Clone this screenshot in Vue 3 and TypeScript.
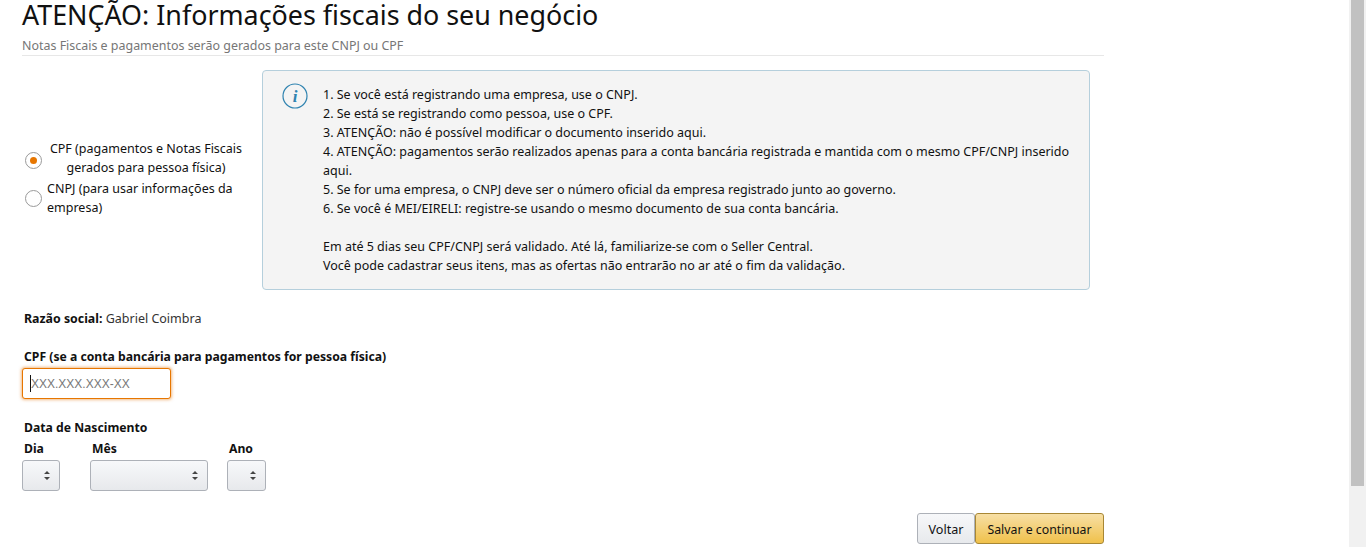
<script setup lang="ts">
const rules: string[] = [
  '1. Se você está registrando uma empresa, use o CNPJ.',
  '2. Se está se registrando como pessoa, use o CPF.',
  '3. ATENÇÃO: não é possível modificar o documento inserido aqui.',
  '4. ATENÇÃO: pagamentos serão realizados apenas para a conta bancária registrada e mantida com o mesmo CPF/CNPJ inserido aqui.',
  '5. Se for uma empresa, o CNPJ deve ser o número oficial da empresa registrado junto ao governo.',
  '6. Se você é MEI/EIRELI: registre-se usando o mesmo documento de sua conta bancária.',
]
const dates = [
  { label: 'Dia', cls: 'dia' },
  { label: 'Mês', cls: 'mes' },
  { label: 'Ano', cls: 'ano' },
]
</script>

<template>
  <div class="page">
    <main class="content">
      <header class="head">
        <h1>ATENÇÃO: Informações fiscais do seu negócio</h1>
        <p>Notas Fiscais e pagamentos serão gerados para este CNPJ ou CPF</p>
      </header>

      <section class="top">
        <div class="radios">
          <div class="radio first">
            <span class="dot on"></span>
            <span class="rtext center">CPF (pagamentos e Notas Fiscais gerados para pessoa física)</span>
          </div>
          <div class="radio second">
            <span class="dot"></span>
            <span class="rtext">CNPJ (para usar informações da empresa)</span>
          </div>
        </div>
        <div class="info">
          <svg class="icon" width="26" height="26" viewBox="0 0 26 26">
            <circle cx="13" cy="13" r="12" fill="none" stroke="#2f83b0" stroke-width="1.2" />
            <text x="13" y="19" text-anchor="middle" class="i">i</text>
          </svg>
          <div class="itext">
            <div v-for="r in rules" :key="r">{{ r }}</div>
            <div class="gap">Em até 5 dias seu CPF/CNPJ será validado. Até lá, familiarize-se com o Seller Central.</div>
            <div>Você pode cadastrar seus itens, mas as ofertas não entrarão no ar até o fim da validação.</div>
          </div>
        </div>
      </section>

      <p class="razao"><b>Razão social:</b> <span class="val">Gabriel Coimbra</span></p>

      <label class="cpf-label">CPF (se a conta bancária para pagamentos for pessoa física)</label>
      <div class="input"><span class="caret"></span><span class="ph">XXX.XXX.XXX-XX</span></div>

      <div class="nasc">Data de Nascimento</div>
      <div class="dates">
        <div v-for="d in dates" :key="d.label" :class="['date', d.cls]">
          <div class="dlabel">{{ d.label }}</div>
          <div class="select">
            <svg width="6" height="9" viewBox="0 0 6 9"><path d="M3 0 6 3H0zM3 9 0 6h6z" fill="#444" /></svg>
          </div>
        </div>
      </div>

      <div class="actions">
        <button class="btn back">Voltar</button>
        <button class="btn save">Salvar e continuar</button>
      </div>
    </main>
    <div class="scrollbar"><div class="thumb"></div></div>
  </div>
</template>

<style>
html, body { margin: 0; overflow: hidden; background: #fff; }
</style>

<style scoped>
.page {
  position: relative;
  height: 547px;
  overflow: hidden;
  font-family: "Noto Sans", "Liberation Sans", sans-serif;
  font-size: 12.5px;
  line-height: 19px;
  color: #111;
}
.content { width: 1082px; margin-left: 22px; }
.head { height: 55px; border-bottom: 1px solid #e7e7e7; }
h1 { margin: 0; font-weight: 400; font-size: 26.85px; line-height: 30px; }
.head p { margin: 8px 0 0; color: #767676; font-size: 12.45px; line-height: 16px; }
.top { display: flex; margin-top: 14px; }
.radios { width: 240px; padding-top: 69px; }
.radio { display: flex; align-items: center; }
.dot {
  width: 17px; height: 17px; border-radius: 50%; border: 1px solid #9a9a9a;
  box-sizing: border-box; flex: none; margin-left: 3px; display: flex;
  align-items: center; justify-content: center; background: #fff;
}
.dot.on { position: relative; top: 2px; }
.dot.on::after { content: ""; width: 7px; height: 7px; border-radius: 50%; background: #e77600; }
.rtext { margin-left: 5px; }
.first .rtext { margin-left: 4px; width: 200px; }
.center { text-align: center; }
.second { margin-top: 2px; }
.second .rtext { width: 195px; }
.info {
  width: 828px; height: 220px; box-sizing: border-box; display: flex;
  background: #f4f4f4; border: 1px solid #b5cfdc; border-radius: 4px;
  padding: 14px 16px 0 19px; margin-left: 0;
}
.icon { flex: none; margin-top: -2px; }
.i { font: italic 700 17px "Liberation Serif", serif; fill: #2f83b0; }
.itext { margin-left: 15px; width: 760px; }
.gap { margin-top: 19px; }
.razao { margin: 19px 0 0 2px; }
.razao b { font-size: 12.35px; font-weight: 700; }
.cpf-label, .nasc, .dlabel { font-size: 12.2px; font-weight: 700; }
.val { color: #333; }
.cpf-label { display: block; margin: 19px 0 0 2px; }
.input {
  width: 149px; height: 31px; margin-top: 2px; box-sizing: border-box; position: relative;
  border: 1px solid #e77600; border-radius: 3px; box-shadow: 0 0 3px 1px rgba(228, 121, 17, .5);
  display: flex; align-items: center; padding-left: 7px; background: #fff;
}
.caret { width: 1px; height: 17px; background: #111; flex: none; }
.ph { color: #777; font-family: "Liberation Sans", sans-serif; font-size: 12px; margin-top: 2px; }
.nasc { margin: 19px 0 0 2px; }
.dates { display: flex; margin-top: 2px; }
.dlabel { margin-left: 2px; }
.dia { width: 68px; }
.mes { width: 137px; }
.select {
  height: 31px; margin-top: 2px; box-sizing: border-box; border: 1px solid #adb1b8; border-radius: 3px;
  background: linear-gradient(#f7f8fa, #e7e9ec); display: flex; align-items: center; justify-content: flex-end;
}
.dia .select { width: 38px; padding-right: 9px; }
.mes .select { width: 118px; padding-right: 9px; }
.ano .select { width: 39px; padding-right: 9px; }
.actions { display: flex; justify-content: flex-end; margin-top: 22px; }
.btn {
  height: 31px; box-sizing: border-box; border-radius: 3px; font: inherit; font-size: 12.3px; color: #111; padding: 2px 0 0;
}
.back { width: 58px; border: 1px solid #adb1b8; background: linear-gradient(#f7f8fa, #e7e9ec); font-size: 12.6px; }
.save { width: 129px; border: 1px solid #a88734; background: linear-gradient(#f7dfa5, #f0c14b); }
.scrollbar { position: absolute; left: 1349px; top: 0; width: 17px; height: 547px; background: #f1f1f1; }
.thumb { position: absolute; left: 2px; top: 0; width: 13px; height: 486px; background: #c1c1c1; }
</style>
